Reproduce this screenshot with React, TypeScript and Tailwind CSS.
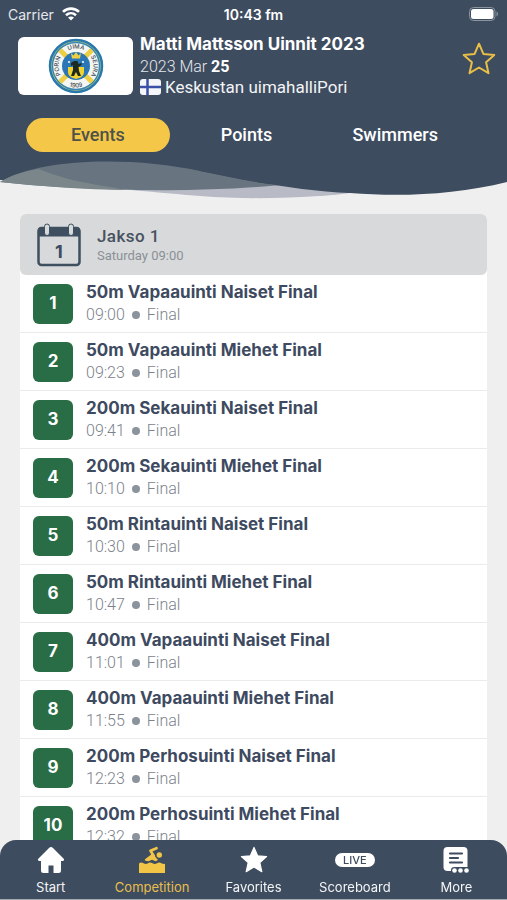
import React from 'react';

interface SwimEvent {
    title: string;
    time: string;
}

interface NavItemProps {
    icon: React.ReactNode;
    label: string;
    active?: boolean;
}

const events: SwimEvent[] = [
    { title: '50m Vapaauinti Naiset Final', time: '09:00' },
    { title: '50m Vapaauinti Miehet Final', time: '09:23' },
    { title: '200m Sekauinti Naiset Final', time: '09:41' },
    { title: '200m Sekauinti Miehet Final', time: '10:10' },
    { title: '50m Rintauinti Naiset Final', time: '10:30' },
    { title: '50m Rintauinti Miehet Final', time: '10:47' },
    { title: '400m Vapaauinti Naiset Final', time: '11:01' },
    { title: '400m Vapaauinti Miehet Final', time: '11:55' },
    { title: '200m Perhosuinti Naiset Final', time: '12:23' },
    { title: '200m Perhosuinti Miehet Final', time: '12:32' },
];

const STAR = 'M12 1.2l3.100 7.200 7.700.7-5.800 5.200 1.700 7.700L12 18l-6.700 4L7 14.300 1.200 9.100l7.700-.7z';

const WifiIcon = () => (
    <svg viewBox="0 0 18 14" className="h-3.5 w-[18px]" fill="none" stroke="white" strokeWidth="2.6">
        <path d="M1 4.900C5.500.5 12.500.5 17 4.900" />
        <path d="M4 8.300c2.900-2.700 7.100-2.700 10 0" />
        <path d="M9 13.500L6 10.500c1.700-1.400 4.300-1.400 6 0z" fill="white" stroke="none" />
    </svg>
);

const BatteryIcon = () => (
    <svg viewBox="0 0 30 14" className="h-3.5 w-[30px]">
        <rect x="0.5" y="0.5" width="25.500" height="13" rx="4" fill="none" stroke="#8b939f" />
        <rect x="2" y="2" width="22.500" height="10" rx="2.500" fill="white" />
        <path d="M27.500 4.500c2 .8 2 4.200 0 5z" fill="#8b939f" />
    </svg>
);

const ClubLogo = () => (
    <svg viewBox="0 0 56 56" className="h-14 w-14" role="img" aria-label="Porin Uimaseura 1909">
        <defs>
            <path id="ring-top" d="M10.500 28a17.500 17.500 0 0 1 35 0" />
            <path id="ring-left" d="M28 45.500a17.500 17.500 0 0 1 0-35" />
            <path id="ring-right" d="M28 10.500a17.500 17.500 0 0 1 0 35" />
            <path id="ring-bottom" d="M6.500 28a21.500 21.500 0 0 0 43 0" />
        </defs>
        <circle cx="28" cy="28" r="26" fill="#b9cf78" stroke="#2877ad" strokeWidth="2.500" />
        <circle cx="28" cy="28" r="23.500" fill="#f4f6f4" stroke="#3a86b0" strokeWidth="1.500" />
        <g stroke="#edcf43" strokeWidth="5">
            <path d="M12 12l8 8M44 12l-8 8M12 44l8-8M44 44l-8-8" />
        </g>
        <circle cx="28" cy="28" r="14" fill="#2b77b5" />
        <path d="M23 15l2.500 2.500L28 14l2.500 3.500L33 15l-1 5.500h-8z" fill="#edcf43" />
        <path d="M20 29h16v5c0 4-4 6-8 7-4-1-8-3-8-7z" fill="#f2d22e" />
        <path d="M26 23h3.500l1 3 3-1v2l-3 2 .5 4 2 5h-3l-2-4-2 4h-3l2-6v-5l-2 1v-3z" fill="#1d2a22" />
        <g fill="white">
            <circle cx="21" cy="24" r="1" />
            <circle cx="35" cy="24" r="1" />
        </g>
        <g fill="#3f4850" className="font-['Inter',sans-serif] text-[6px] font-medium" textAnchor="middle">
            <text><textPath href="#ring-top" startOffset="50%">UIMA</textPath></text>
            <text><textPath href="#ring-left" startOffset="50%">PORIN</textPath></text>
            <text><textPath href="#ring-right" startOffset="50%">SEURA</textPath></text>
            <text><textPath href="#ring-bottom" startOffset="50%">1909</textPath></text>
        </g>
    </svg>
);

const FinnishFlag = () => (
    <svg viewBox="0 0 21 16" className="h-4 w-[21px]" role="img" aria-label="Finland">
        <rect width="21" height="16" rx="3" fill="#f4f6fa" />
        <path d="M7.500 0v16M0 8h21" stroke="#3b4fa6" strokeWidth="2.500" />
    </svg>
);

const Waves = () => (
    <svg viewBox="0 0 507 40" preserveAspectRatio="none" className="block h-10 w-full">
        <path d="M0 0H507V22C455 35 400 37 350 33L200 20H0z" fill="#3e4c5f" />
        <path d="M100 27L280 24L350 33C310 38 250 40 200 36C165 33 130 30 100 27z" fill="#b8bbc6" />
        <path d="M0 22C40 -2 130 -4 200 11C230 17 255 23 280 25C210 32 130 31 60 27C40 26 20 24 0 22z" fill="#687580" />
        <path d="M0 22C12 15 24 11 39 9C65 20 90 24 128 30C85 30 40 26 0 22z" fill="#7b868b" />
        <path d="M200 0V11C250 21 300 31 350 33V0z" fill="#3e4c5f" />
    </svg>
);

const CalendarIcon = () => (
    <svg viewBox="0 0 44 44" className="h-11 w-11">
        <rect x="1.500" y="5" width="41" height="37" rx="3" fill="none" stroke="#3e4f60" strokeWidth="2.500" />
        <path d="M1 13.500V8q0-4 4-4h34q4 0 4 4v5.500z" fill="#3e4f60" />
        <g fill="#d8dadb" stroke="#3e4f60">
            <rect x="7.500" y="1" width="5" height="11.500" rx="2.500" />
            <rect x="31.500" y="1" width="5" height="11.500" rx="2.500" />
        </g>
        <text x="22" y="35" textAnchor="middle" fill="#3e4c5f" className="font-['Inter',sans-serif] text-[18px] font-bold">1</text>
    </svg>
);

const HomeIcon = () => (
    <svg viewBox="0 0 28 28" className="size-7" fill="white">
        <path d="M14 1q-1 0-2 1L1.500 12.500c-1.200 1.200-.5 2.500 1 2.500H4v9.500Q4 27 6.500 27h5v-7.500h5V27h5q2.500 0 2.500-2.500V15h1.500c1.500 0 2.200-1.300 1-2.500L16 2q-1-1-2-1z" />
    </svg>
);

const SwimmerIcon = () => (
    <svg viewBox="0 0 28 28" className="size-7" fill="#f2c546">
        <path d="M1 17.500q2-1.800 4.500-.3t4.500 0 4.500 0 4.500 0 4.500 0 3.500.3V27H1z" />
        <path d="M18.500 2.200L12.500 4.800l3.300 5.200" fill="none" stroke="#f2c546" strokeWidth="2.700" strokeLinecap="round" strokeLinejoin="round" />
        <path d="M14.500 7.500L7 13.300q-.8 1 .5 1.400l3 .6 3.500-1.500 3.500 1.500 2.500-1.300z" />
        <circle cx="21.300" cy="9" r="2.700" />
    </svg>
);

const StarIcon = () => (
    <svg viewBox="0 0 24 24" className="size-7" fill="white" stroke="white" strokeLinejoin="round">
        <path d={STAR} />
    </svg>
);

const MoreIcon = () => (
    <svg viewBox="0 0 28 28" className="size-7">
        <rect x="1.500" y="1" width="24" height="24" rx="4" fill="white" />
        <path d="M8 7.500h12M8 12h8M8 16.500h12" stroke="#3e4c5f" strokeWidth="2.200" strokeLinecap="round" />
        <path d="M9 25.500v-1.500q0-3 3.500-3h13.500v5z" fill="#3e4c5f" />
        <g fill="white">
            <circle cx="12.500" cy="24.500" r="2.300" />
            <circle cx="18.500" cy="24.500" r="2.300" />
            <circle cx="24.500" cy="24.500" r="2.300" />
        </g>
    </svg>
);

const LiveBadge = () => (
    <span className="rounded-full bg-white px-2 text-[11px] leading-[14px] font-medium text-[#3e4c5f]">LIVE</span>
);

const StatusBar = () => (
    <div className="grid h-7 grid-cols-3 items-center px-2 text-[14px]">
        <span className="flex items-center gap-2 text-gray-200">
            Carrier
            <WifiIcon />
        </span>
        <span className="text-center font-semibold">10:43 fm</span>
        <span className="flex justify-end">
            <BatteryIcon />
        </span>
    </div>
);

const EventRow: React.FC<SwimEvent & { number: number }> = ({ number, title, time }) => (
    <li className="flex h-[58px] items-center gap-[13px] border-b border-[#ebebeb] bg-white pl-[13px]">
        <span className="flex size-10 shrink-0 items-center justify-center rounded-md bg-[#286d45] text-[17px] font-bold text-white">
            {number}
        </span>
        <div className="pb-0.5">
            <h3 className="text-[17px] leading-6 font-bold text-[#3e4a5f]">{title}</h3>
            <p className="flex items-center gap-[7px] font-['Roboto',sans-serif] text-[16px] leading-[22px] font-light text-[#7c828b]">
                {time}
                <span className="size-2 rounded-full bg-[#8b939d]" />
                Final
            </p>
        </div>
    </li>
);

const NavItem: React.FC<NavItemProps> = ({ icon, label, active }) => (
    <a
        href="#"
        className={`flex flex-1 flex-col items-center gap-[3px] text-[13px] leading-5 ${active ? 'text-[#e8bf4d]' : 'text-gray-100'}`}
    >
        <span className="flex h-7 items-center">{icon}</span>
        {label}
    </a>
);

const App = () => (
    <div className="h-screen overflow-hidden bg-[#efefef] font-['Inter',sans-serif]">
        <header>
            <div className="bg-[#3e4c5f] text-white">
                <StatusBar />
                <div className="flex items-start gap-[7px] pt-1 pr-[11px] pl-[18px]">
                    <div className="mt-[5px] flex w-[115px] shrink-0 justify-center rounded-md bg-white py-px">
                        <ClubLogo />
                    </div>
                    <div className="min-w-0 flex-1">
                        <h1 className="mb-px text-[17px] leading-6 font-bold">Matti Mattsson Uinnit 2023</h1>
                        <p className="font-['Roboto',sans-serif] text-[16px] leading-5 font-light text-gray-200">
                            2023 Mar <span className="font-bold text-white">25</span>
                        </p>
                        <p className="flex items-center gap-1 font-['Roboto',sans-serif] text-[17px] leading-5 text-gray-100">
                            <FinnishFlag />
                            Keskustan uimahalliPori
                        </p>
                    </div>
                    <button type="button" aria-label="Add to favorites" className="mt-2.5">
                        <svg viewBox="0 0 24 24" className="size-[34px]" fill="none" stroke="#e9bf48" strokeWidth="1.400" strokeLinejoin="round">
                            <path d={STAR} />
                        </svg>
                    </button>
                </div>
                <nav className="grid grid-cols-3 gap-[5px] pt-[21px] pr-10 pb-2 pl-[26px] font-['Roboto',sans-serif] text-[18px] leading-[34px] font-medium">
                    <button type="button" className="rounded-full bg-[#f4c749] text-[#4f5248]">Events</button>
                    <button type="button">Points</button>
                    <button type="button">Swimmers</button>
                </nav>
            </div>
            <Waves />
        </header>

        <main className="mx-5 mt-3.5">
            <section className="rounded-t-md bg-white">
                <div className="flex h-[61px] items-center gap-4 rounded-md bg-[#d7d9da] pl-[17px]">
                    <CalendarIcon />
                    <div className="pt-[3px] font-['Roboto',sans-serif]">
                        <h2 className="text-[17px] leading-5 font-medium tracking-wide text-[#475260]">Jakso 1</h2>
                        <p className="text-[13px] leading-5 text-[#8b9096]">Saturday 09:00</p>
                    </div>
                </div>
                <ul>
                    {events.map((event, index) => (
                        <EventRow key={event.title} number={index + 1} {...event} />
                    ))}
                </ul>
            </section>
        </main>

        <nav className="fixed inset-x-0 bottom-0 flex rounded-t-2xl border-b border-[#a5abb3] bg-[#3e4c5f] pt-1.5 pb-0.5">
            <NavItem icon={<HomeIcon />} label="Start" />
            <NavItem icon={<SwimmerIcon />} label="Competition" active />
            <NavItem icon={<StarIcon />} label="Favorites" />
            <NavItem icon={<LiveBadge />} label="Scoreboard" />
            <NavItem icon={<MoreIcon />} label="More" />
        </nav>
    </div>
);

export default App;
